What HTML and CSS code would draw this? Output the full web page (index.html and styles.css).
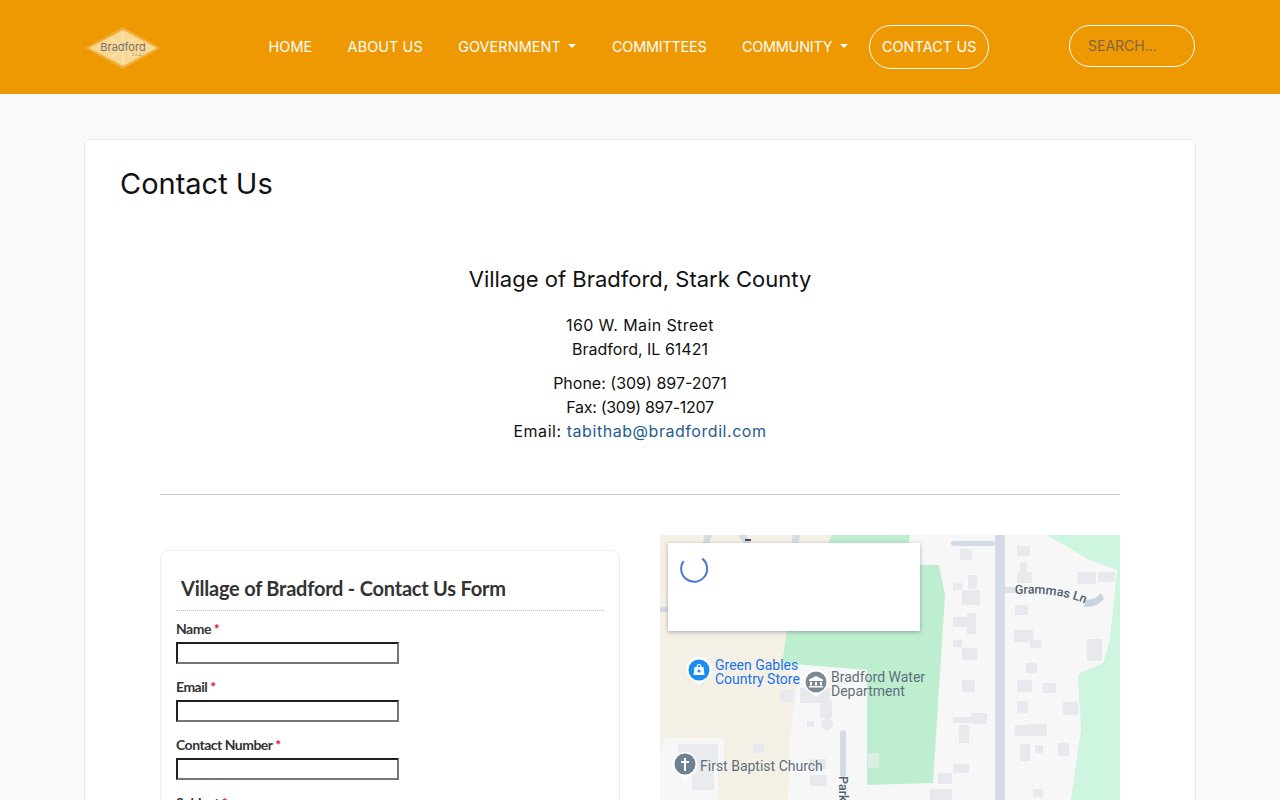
FILE: index.html
```html
<!DOCTYPE html>
<html>
<head>
  <title>Contact Us</title>
  <link rel="stylesheet" href="styles.css">
</head>
<body>
  <header class="site-header">
    <div class="header-inner">
      <a class="logo" href="#">
        <svg width="76" height="42" viewBox="0 0 76 42">
          <polygon points="38,0 76,21 38,42 0,21" fill="#f3ad35"/>
          <polygon points="38,3 72,21 38,39 4,21" fill="#f9d795"/>
          <g stroke="#fdf0d2" stroke-width="1" opacity="0.8">
            <line x1="38" y1="5" x2="38" y2="37"/>
            <line x1="26" y1="11" x2="50" y2="31"/>
            <line x1="50" y1="11" x2="26" y2="31"/>
          </g>
          <text class="logo-text" x="38" y="24" text-anchor="middle">Bradford</text>
          <text class="logo-small" x="52" y="29" text-anchor="middle">L.L.C</text>
        </svg>
      </a>
      <nav class="main-nav">
        <a href="#">HOME</a>
        <a href="#">ABOUT US</a>
        <a href="#" class="has-caret">GOVERNMENT</a>
        <a href="#" class="narrow">COMMITTEES</a>
        <a href="#" class="has-caret narrow">COMMUNITY</a>
        <a href="#" class="nav-btn">CONTACT US</a>
      </nav>
      <input class="search" type="text" placeholder="SEARCH...">
    </div>
  </header>

  <main class="card">
    <h1>Contact Us</h1>
    <div class="content">
      <div class="address">
        <h4>Village of Bradford, Stark County</h4>
        <p><span class="wide">160 W. Main Street</span><br>Bradford, IL 61421</p>
        <p>Phone: (309) 897-2071<br><span class="tight">Fax: (309) 897-1207</span><br><span class="wider">Email: <a href="#">tabithab@bradfordil.com</a></span></p>
      </div>
      <hr>
      <div class="columns">
        <form class="contact-form">
          <h3>Village of Bradford - Contact Us Form</h3>
          <div class="field">
            <label>Name <span class="req">*</span></label>
            <input type="text">
          </div>
          <div class="field">
            <label>Email <span class="req">*</span></label>
            <input type="text">
          </div>
          <div class="field">
            <label>Contact Number <span class="req">*</span></label>
            <input type="text">
          </div>
          <div class="field">
            <label>Subject <span class="req">*</span></label>
            <input type="text">
          </div>
        </form>
        <div class="map">
          <svg class="map-art" width="460" height="265" viewBox="0 0 460 265">
            <rect width="460" height="265" fill="#f7f7f8"/>
            <polygon points="0,0 172,0 127,96 122,128 137,150 130,200 128,265 0,265" fill="#f5f0e6"/>
            <polygon points="172,0 250,0 245,30 279,30 285,60 273,248 207,250 207,135 122,128 127,96" fill="#bdeed0"/>
            <polygon points="387,0 460,0 460,265 411,265 421,195 418,140 420,138 443,128 450,105 457,35 430,25" fill="#cdf5df"/>
            <!-- roads -->
            <g fill="#d3dce6">
              <rect x="335" y="0" width="10" height="265"/>
              <rect x="291" y="6" width="44" height="5" rx="2.5"/>
              <rect x="345" y="52" width="12" height="6" fill="#dbe1e8"/>
              <rect x="180" y="195" width="6" height="47" rx="3"/>
              <rect x="0" y="72" width="8" height="5"/>
              <path d="M45 0 L52 0 L48 10 L42 10 Z M78 0 L86 0 L92 10 L85 10 Z M133 0 L140 0 L138 10 L131 10 Z"/>
              <path d="M426 65 Q436 65 441 58 L444 64 Q436 73 424 72 Z" fill="#c9d3de"/>
            </g>
            <rect x="85" y="4" width="6" height="2" fill="#44505c"/>
            <!-- buildings -->
            <g fill="#e8e9ed">
              <rect x="300" y="14" width="12" height="11"/>
              <rect x="357" y="11" width="13" height="10"/>
              <rect x="360" y="28" width="7" height="10"/>
              <rect x="357" y="37" width="15" height="11"/>
              <rect x="417" y="37" width="19" height="12"/>
              <rect x="438" y="37" width="17" height="10"/>
              <rect x="308" y="40" width="9" height="14"/>
              <rect x="293" y="48" width="9" height="7"/>
              <rect x="302" y="55" width="18" height="15"/>
              <rect x="293" y="82" width="14" height="10"/>
              <rect x="307" y="78" width="9" height="21"/>
              <rect x="293" y="105" width="9" height="7"/>
              <rect x="302" y="113" width="15" height="12"/>
              <rect x="355" y="70" width="13" height="10"/>
              <rect x="354" y="95" width="19" height="12"/>
              <rect x="370" y="105" width="11" height="8"/>
              <rect x="427" y="104" width="15" height="22"/>
              <rect x="366" y="128" width="11" height="10"/>
              <rect x="302" y="145" width="13" height="12"/>
              <rect x="357" y="145" width="15" height="12"/>
              <rect x="383" y="148" width="13" height="10"/>
              <rect x="357" y="166" width="11" height="12"/>
              <rect x="403" y="167" width="15" height="13"/>
              <rect x="293" y="182" width="18" height="6"/>
              <rect x="311" y="178" width="16" height="11"/>
              <rect x="299" y="190" width="10" height="18"/>
              <rect x="355" y="190" width="12" height="11"/>
              <rect x="367" y="189" width="20" height="12"/>
              <rect x="360" y="209" width="10" height="17"/>
              <rect x="375" y="210" width="8" height="8"/>
              <rect x="398" y="208" width="11" height="13"/>
              <rect x="293" y="229" width="16" height="9"/>
              <rect x="278" y="238" width="14" height="11"/>
              <rect x="270" y="254" width="22" height="11"/>
              <rect x="373" y="254" width="10" height="8"/>
              <rect x="120" y="155" width="13" height="12"/>
              <rect x="140" y="153" width="30" height="15"/>
              <rect x="160" y="165" width="12" height="18"/>
              <rect x="147" y="186" width="7" height="6"/>
              <circle cx="167" cy="189" r="6"/>
              <rect x="93" y="209" width="11" height="9"/>
              <rect x="149" y="224" width="17" height="10"/>
              <rect x="150" y="240" width="17" height="11"/>
              <rect x="208" y="218" width="11" height="15" fill="#dbeee2"/>
            </g>
            <path d="M5 203 H64 V234 H58 V265 H0 V215 Z" fill="#f7f7f8"/>
            <rect x="18" y="209" width="40" height="20" fill="#eaebef"/>
            <rect x="32" y="229" width="22" height="26" fill="#eaebef"/>
            <!-- pins -->
            <g class="pin">
              <path d="M39 150 L30 143 A12.5 12.5 0 1 1 48 143 Z" fill="#fff"/>
              <circle cx="39" cy="135" r="10.5" fill="#1a8cf0"/>
              <path d="M34.5 132 H43.5 L44.5 140 H33.5 Z M36.5 132 A2.5 3 0 0 1 41.5 132 H40.3 A1.3 2 0 0 0 37.7 132 Z" fill="#fff"/>
              <circle cx="39" cy="136" r="1.6" fill="#1a8cf0"/>
            </g>
            <g class="pin">
              <path d="M156 162 L147 155 A12.5 12.5 0 1 1 165 155 Z" fill="#fff"/>
              <circle cx="156" cy="147" r="10.5" fill="#7b8a97"/>
              <path d="M156 141 L163 144.5 V146 H149 V144.5 Z M150 147 H152 V150.5 H150 Z M155 147 H157 V150.5 H155 Z M160 147 H162 V150.5 H160 Z M149 151 H163 V152.5 H149 Z" fill="#fff"/>
            </g>
            <g class="pin">
              <path d="M25 245 L16 238 A12.5 12.5 0 1 1 34 238 Z" fill="#fff"/>
              <circle cx="25" cy="229" r="10.5" fill="#6c8290"/>
              <path d="M24 223 H26 V226 H29 V228 H26 V236 H24 V228 H21 V226 H24 Z" fill="#fff"/>
            </g>
            <!-- labels -->
            <text class="map-label blue" x="55" y="135">Green Gables</text>
            <text class="map-label blue" x="55" y="149">Country Store</text>
            <text class="map-label gray" x="171" y="147">Bradford Water</text>
            <text class="map-label gray" x="171" y="161">Department</text>
            <text class="map-label gray" x="40" y="236">First Baptist Church</text>
            <path id="grammas" d="M355 59 C375 58 405 58 432 72" fill="none"/>
            <text class="road-label"><textPath href="#grammas">Grammas Ln</textPath></text>
            <text class="road-label" transform="translate(179,241) rotate(90)">Park</text>
          </svg>
          <div class="map-box">
            <svg width="30" height="30" viewBox="0 0 30 30">
              <path d="M24.2 5.4 A13 13 0 1 1 5.4 6.2" fill="none" stroke="#4a74d9" stroke-width="2" transform="rotate(-5 15 15)"/>
            </svg>
          </div>
        </div>
      </div>
    </div>
  </main>
</body>
</html>
```

FILE: styles.css
```css
body {
  margin: 0;
  background-color: #f9f9f9;
  font-family: "Inter", "Open Sans", sans-serif;
  color: #111;
  height: 800px;
  overflow: hidden;
}

.site-header {
  background-color: #ee9802;
  height: 94px;
}

.header-inner {
  width: 1110px;
  margin: 0 auto;
  height: 94px;
  display: flex;
  align-items: center;
}

.logo {
  display: block;
  width: 76px;
  height: 42px;
  margin-top: 2px;
}

.logo-text {
  font-family: "Inter", sans-serif;
  font-size: 11px;
  fill: #77736a;
}

.logo-small {
  font-family: "Inter", sans-serif;
  font-size: 4px;
  fill: #8a8478;
}

.main-nav {
  display: flex;
  align-items: center;
  margin-left: 89.8px;
}

.main-nav a {
  color: #fff;
  text-decoration: none;
  font-size: 14.4px;
  letter-spacing: 0.1px;
  padding: 0 17.7px 2px;
}

.main-nav a.narrow {
  letter-spacing: -0.2px;
}

.main-nav a.has-caret {
  padding-right: 0;
  margin-right: 18px;
  display: flex;
  align-items: center;
}

.main-nav a.has-caret::after {
  content: "";
  margin-left: 7.5px;
  border-top: 4px solid #fff;
  border-left: 4px solid transparent;
  border-right: 4px solid transparent;
}

.main-nav a.nav-btn {
  border: 1px solid #fff;
  border-radius: 22px;
  padding: 0 11.5px;
  height: 42px;
  line-height: 42px;
  margin-left: 3.5px;
}

.search {
  box-sizing: border-box;
  width: 126px;
  height: 42px;
  margin-left: auto;
  margin-top: -2px;
  padding: 0 18px 2px;
  background: transparent;
  border: 1px solid #fff;
  border-radius: 21px;
  font-family: "Inter", sans-serif;
  font-size: 14px;
}

.search::placeholder {
  color: #7d6a45;
  opacity: 1;
}

.card {
  box-sizing: border-box;
  width: 1112px;
  margin: 45px auto 0;
  padding: 25px 35px 40px;
  background-color: #fff;
  border: 1px solid #e9e9e9;
  border-radius: 6px;
}

.card h1 {
  margin: 0;
  font-size: 29px;
  font-weight: 400;
  line-height: 38px;
}

.content {
  width: 960px;
  margin: 0 auto;
}

.address {
  text-align: center;
  padding-top: 62px;
  font-size: 16px;
  line-height: 24px;
}

.address h4 {
  margin: 0 0 20px;
  font-size: 22px;
  font-weight: 400;
  line-height: 28px;
}

.address p {
  margin: 0 0 10px;
}

.address a {
  color: #1f5c90;
  text-decoration: none;
}

.wide {
  letter-spacing: 0.4px;
}

.wider {
  letter-spacing: 0.55px;
}

.tight {
  letter-spacing: -0.3px;
}

hr {
  border: none;
  border-top: 1px solid #ccc;
  margin: 51px 0 40px;
}

.columns {
  display: grid;
  grid-template-columns: 460px 460px;
  gap: 40px;
  align-items: start;
}

.contact-form {
  box-sizing: border-box;
  margin-top: 15px;
  padding: 24px 15px 20px;
  border: 1px solid #eee;
  border-radius: 8px;
  font-family: "Lato", sans-serif;
  color: #333;
}

.contact-form h3 {
  margin: 0 0 9px;
  padding: 0 5px 8px;
  border-bottom: 1px dotted #bbb;
  font-size: 20px;
  font-weight: 700;
  line-height: 27px;
  letter-spacing: -0.23px;
}

.field {
  margin-bottom: 14px;
}

.field label {
  display: block;
  font-size: 14px;
  font-weight: 700;
  line-height: 17px;
  margin-bottom: 5px;
  letter-spacing: -0.5px;
}

.req {
  color: #e0102f;
}

.field input {
  display: block;
  box-sizing: border-box;
  width: 223px;
  height: 22px;
  padding: 0;
  border: 2px solid;
  border-color: #1f1f1f #767676 #767676 #1f1f1f;
  background: #fff;
}

.map {
  position: relative;
  height: 265px;
}

.map-art {
  display: block;
}

.map-box {
  position: absolute;
  left: 8px;
  top: 8px;
  width: 252px;
  height: 88px;
  padding: 11px;
  box-sizing: border-box;
  background-color: #fff;
  box-shadow: 0 1px 4px rgba(0, 0, 0, 0.3);
}

.map-label {
  font-family: "Roboto", sans-serif;
  font-size: 14px;
}

.map-label.blue {
  fill: #1a73e8;
}

.map-label.gray {
  fill: #5f6f7c;
}

.road-label {
  font-family: "Roboto", sans-serif;
  font-size: 12.5px;
  font-weight: 500;
  fill: #4f5f70;
}
```
